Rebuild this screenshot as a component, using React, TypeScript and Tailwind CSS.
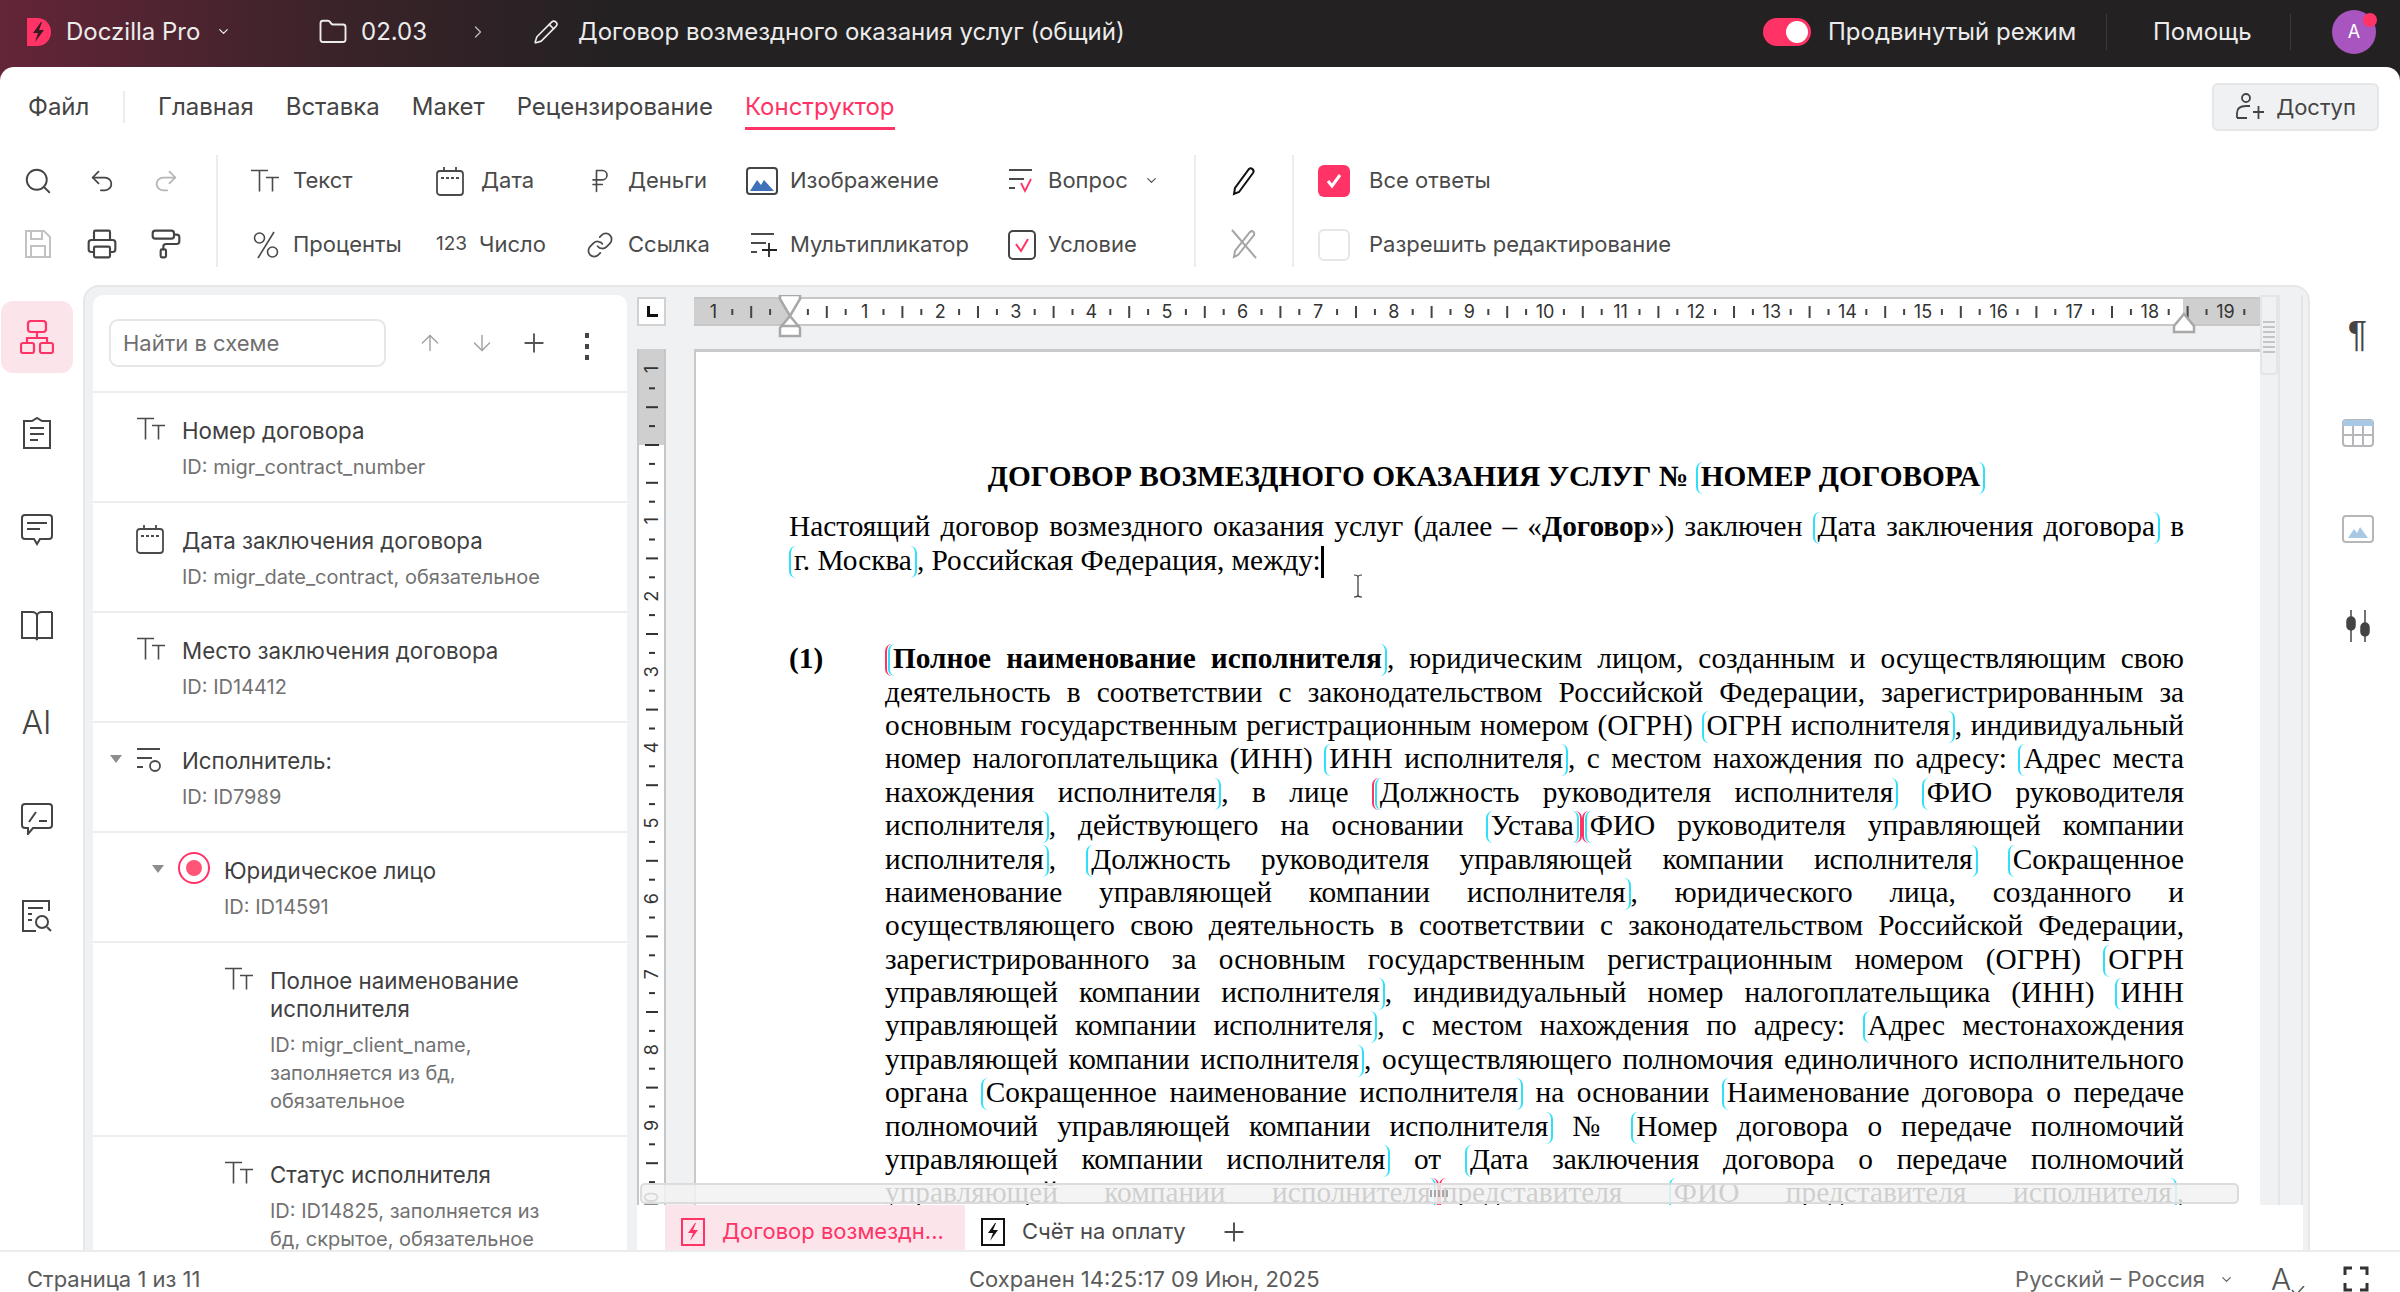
import React from "react";
import { ChevronDown, ChevronRight, Search, Undo2, Redo2, Printer, PaintRoller, Folder, Pencil, RussianRuble, Link, ArrowUp, ArrowDown, Plus } from "lucide-react";

const PINK = "#ff3366";

// {} cyan field, [] pink field, * bold
const parse = (s: string) => {
  const out: React.ReactNode[] = [];
  let bold = false;
  let buf = "";
  const flush = (k: number) => {
    if (buf) out.push(bold ? <b key={k}>{buf}</b> : <span key={k}>{buf}</span>);
    buf = "";
  };
  s.split("").forEach((c, i) => {
    if (c === "*") {
      flush(i);
      bold = !bold;
    } else if (c === "{") {
      flush(i);
      out.push(<i key={"m" + i} className="inline-block w-[7px] mr-[-2px] h-[32px] align-[-8px] border-l-2 border-[#30e0fa] rounded-l-[8px]" />);
    } else if (c === "}") {
      flush(i);
      out.push(<i key={"m" + i} className="inline-block w-[7px] ml-[-2px] h-[32px] align-[-8px] border-r-2 border-[#30e0fa] rounded-r-[8px]" />);
    } else if (c === "[") {
      flush(i);
      out.push(<i key={"m" + i} className="inline-block w-[7px] mr-[-4px] h-[32px] align-[-8px] border-l-2 border-[#ff3366] rounded-l-[8px]" />);
    } else if (c === "]") {
      flush(i);
      out.push(<i key={"m" + i} className="inline-block w-[7px] ml-[-4px] h-[32px] align-[-8px] border-r-2 border-[#ff3366] rounded-r-[8px]" />);
    } else buf += c;
  });
  flush(s.length);
  return out;
};

const lines = [
  "[{*Полное наименование исполнителя*}, юридическим лицом, созданным и осуществляющим свою",
  "деятельность в соответствии с законодательством Российской Федерации, зарегистрированным за",
  "основным государственным регистрационным номером (ОГРН) {ОГРН исполнителя}, индивидуальный",
  "номер налогоплательщика (ИНН) {ИНН исполнителя}, с местом нахождения по адресу: {Адрес места",
  "нахождения исполнителя}, в лице [{Должность руководителя исполнителя} {ФИО руководителя",
  "исполнителя}, действующего на основании {Устава}][{ФИО руководителя управляющей компании",
  "исполнителя}, {Должность руководителя управляющей компании исполнителя} {Сокращенное",
  "наименование управляющей компании исполнителя}, юридического лица, созданного и",
  "осуществляющего свою деятельность в соответствии с законодательством Российской Федерации,",
  "зарегистрированного за основным государственным регистрационным номером (ОГРН) {ОГРН",
  "управляющей компании исполнителя}, индивидуальный номер налогоплательщика (ИНН) {ИНН",
  "управляющей компании исполнителя}, с местом нахождения по адресу: {Адрес местонахождения",
  "управляющей компании исполнителя}, осуществляющего полномочия единоличного исполнительного",
  "органа {Сокращенное наименование исполнителя} на основании {Наименование договора о передаче",
  "полномочий управляющей компании исполнителя} № {Номер договора о передаче полномочий",
  "управляющей компании исполнителя} от {Дата заключения договора о передаче полномочий",
  "управляющей компании исполнителя}][представителя {ФИО представителя исполнителя},",
];

const TT = ({ className = "" }: { className?: string }) => (
  <svg width="30" height="24" viewBox="0 0 30 24" fill="none" stroke="#4a4a4a" strokeWidth="1.6" className={className}>
    <path d="M1 1.500h17M9.500 1.500v21M16 8.500h13M22.500 8.500v14" />
  </svg>
);

const Cal = () => (
  <svg width="28" height="30" viewBox="0 0 28 30" fill="none" stroke="#4a4a4a" strokeWidth="1.8">
    <rect x="1" y="5" width="26" height="24" rx="3" />
    <path d="M8 1v4M20 1v4" />
    <path d="M5 12h18" strokeDasharray="3 2" />
  </svg>
);

const Lines = ({ mark }: { mark: "check" | "plus" | "circle" }) => (
  <svg width="28" height="26" viewBox="0 0 28 26" fill="none" stroke="#4a4a4a" strokeWidth="1.8">
    <path d="M1 2h23M1 11h15M1 20h6" />
    {mark === "check" && <path d="M13 15l4 8 6-12" stroke={PINK} />}
    {mark === "plus" && <path d="M19 11v14M12 18h15" stroke="#222" />}
    {mark === "circle" && <circle cx="19" cy="19" r="5" />}
  </svg>
);

const Img = ({ light }: { light?: boolean }) => (
  <svg width="32" height="28" viewBox="0 0 32 28" fill="none">
    <rect x="1" y="1" width="30" height="26" rx="3" stroke={light ? "#b5b7ba" : "#444"} strokeWidth="2" />
    <path d={light ? "M6 23l6-9 3 4 3-6 8 11z" : "M4 24l7-11 4 5 3-5 10 11z"} fill={light ? "#a8c8e4" : "#3f72b8"} />
  </svg>
);

const Bolt = ({ color }: { color: string }) => (
  <svg width="24" height="28" viewBox="0 0 24 28" fill="none">
    <rect x="1" y="1" width="22" height="26" stroke={color} strokeWidth="2" />
    <path d="M14 5l-7 10h5l-3 8 8-11h-5l3-7z" fill={color} />
  </svg>
);

const Tool = ({ icon, label, chevron }: { icon: React.ReactNode; label: string; chevron?: boolean }) => (
  <div className="flex items-center text-[#4a4a4a]">
    {icon}
    <span className="whitespace-nowrap">{label}</span>
    {chevron && <ChevronDown size={15} className="ml-[16px] text-[#555]" />}
  </div>
);

const Row = ({ icon, title, sub, indent, caret }: { icon: React.ReactNode; title: React.ReactNode; sub: React.ReactNode; indent: number; caret?: boolean }) => (
  <div className="border-b-2 border-[#eceded]">
    <div className="flex pt-[24px] pb-[20px]" style={{ paddingLeft: indent }}>
      <div className="w-[46px] relative shrink-0">
        {caret && <div className="absolute left-[-26px] top-[8px] w-0 h-0 border-x-[6px] border-x-transparent border-t-[8px] border-t-[#8d8d8d]" />}
        {icon}
      </div>
      <div className="whitespace-nowrap">
        <div className="text-[22.3px] leading-[28px] text-[#3f3f3f]">{title}</div>
        <div className="mt-[8px] text-[20px] leading-[28px] text-[#727272]">{sub}</div>
      </div>
    </div>
  </div>
);

const HRuler = () => {
  const cm = 75.6;
  const x0 = 95;
  const ticks: React.ReactNode[] = [];
  for (let i = -5; i < 80; i++) {
    const x = x0 + (i * cm) / 4;
    if (x < 4 || x > 1560) continue;
    const m = ((i % 4) + 4) % 4;
    if (m === 0) {
      const n = Math.abs(i / 4);
      if (n !== 0)
        ticks.push(
          <text key={i} x={x} y={21} textAnchor="middle" fontSize="18" fontFamily="Inter, sans-serif" fill="#333">
            {n}
          </text>
        );
    } else {
      const h = m === 2 ? 12 : 6;
      ticks.push(<rect key={i} x={x - 1} y={15 - h / 2} width="2" height={h} fill="#444" />);
    }
  }
  return (
    <svg width="1566" height="29" className="block">
      <rect width="1566" height="29" fill="#cfcfcf" />
      <rect x="95" y="2" width="1394" height="25" fill="#fff" />
      <rect width="1566" height="2" y="0" fill="#c6c7c9" />
      <rect width="1566" height="2" y="27" fill="#c6c7c9" />
      {ticks}
    </svg>
  );
};

const VRuler = () => {
  const cm = 75.6;
  const y0 = 96;
  const ticks: React.ReactNode[] = [];
  for (let i = -4; i < 41; i++) {
    const y = y0 + (i * cm) / 4;
    if (y < 4) continue;
    const m = ((i % 4) + 4) % 4;
    if (m === 0 && i !== 0) {
      ticks.push(
        <text key={i} x={0} y={0} textAnchor="middle" fontSize="18" fontFamily="Inter, sans-serif" fill="#333" transform={`translate(21 ${y}) rotate(-90)`}>
          {Math.abs(i / 4)}
        </text>
      );
    } else {
      const w = i === 0 ? 14 : m === 2 ? 12 : 6;
      ticks.push(<rect key={i} x={15 - w / 2} y={y - 1} width={w} height="2" fill="#333" />);
    }
  }
  return (
    <svg width="29" height="856" className="block">
      <rect width="29" height="856" fill="#fff" />
      <rect width="29" height="96" fill="#cfcfcf" />
      <rect width="2" height="856" fill="#c6c7c9" />
      <rect x="27" width="2" height="856" fill="#c6c7c9" />
      {ticks}
    </svg>
  );
};

const Grip = () => <div className="w-[20px] h-[7px] bg-[repeating-linear-gradient(90deg,#a8a8a8_0_2px,transparent_2px_4px)]" />;

export default function App() {
  return (
    <div className="w-[2400px] h-[1292px] flex flex-col overflow-hidden bg-[linear-gradient(90deg,#642538_0%,#3a2329_14%,#232122_26%)] font-['Inter',sans-serif]">
      {/* top bar */}
      <div className="h-[67px] shrink-0 flex items-center pb-[4px] text-[24px] text-[#ececec]">
        <svg width="26" height="30" viewBox="0 0 26 30" className="ml-[26px]">
          <path d="M1 1h10c8 0 14 6 14 14s-6 14-14 14H1z" fill={PINK} />
          <path d="M15 5l-8 11h5l-3 9 9-12h-5l3-8z" fill="#3a1a22" />
        </svg>
        <span className="ml-[14px] w-[150px]">Doczilla Pro</span>
        <ChevronDown size={15} />
        <Folder size={30} strokeWidth={1.5} className="ml-[87px]" />
        <span className="ml-[13px] w-[107px]">02.03</span>
        <ChevronRight size={20} strokeWidth={1.5} className="text-[#bbb]" />
        <Pencil size={26} strokeWidth={1.5} className="ml-[45px]" />
        <span className="ml-[19px]">Договор возмездного оказания услуг (общий)</span>
        <div className="ml-auto flex items-center">
          <div className="w-[48px] h-[28px] rounded-full bg-[#ff3366] flex items-center justify-end pr-[3px]">
            <div className="w-[22px] h-[22px] rounded-full bg-white" />
          </div>
          <span className="ml-[17px] w-[279px] border-r border-[#3c3a3b]">Продвинутый режим</span>
          <span className="ml-[46px] w-[138px] border-r border-[#3c3a3b]">Помощь</span>
          <div className="relative ml-[41px] mr-[24px] w-[44px] h-[44px] rounded-full bg-[#a855c0] flex items-center justify-center text-[18px] text-white">
            A
            <div className="absolute right-[-1px] top-[3px] w-[14px] h-[14px] rounded-full bg-[#ff3366]" />
          </div>
        </div>
      </div>

      <div className="flex-1 min-h-0 flex flex-col bg-white rounded-t-[14px]">
        {/* tabs */}
        <div className="h-[77px] shrink-0 flex text-[24px] text-[#444]">
          <div className="ml-[28px] w-[97px] mt-[24px] h-[32px] border-r-2 border-[#eceded] leading-[32px]">Файл</div>
          <div className="ml-[33px] flex gap-[32px] leading-[32px] pt-[24px]">
            <span>Главная</span>
            <span>Вставка</span>
            <span>Макет</span>
            <span>Рецензирование</span>
            <span className="text-[#ff3366] h-[39px] border-b-[3px] border-[#ff3366]">Конструктор</span>
          </div>
          <div className="ml-auto mr-[21px] mt-[16px] w-[167px] h-[48px] rounded-[6px] bg-[#f0f1f3] border-2 border-[#e4e6e8] flex items-center justify-center gap-[11px] text-[22px]">
            <svg width="30" height="28" viewBox="0 0 30 28" fill="none" stroke="#444" strokeWidth="1.8">
              <circle cx="11" cy="5" r="4" />
              <path d="M2 25v-5c0-5 4-7 9-7h4M18 19h11M23.500 13v13M2 25h10" />
            </svg>
            Доступ
          </div>
        </div>

        {/* toolbar */}
        <div className="h-[141px] shrink-0 flex items-start pt-[5px] text-[22px]">
          <div className="ml-[6px] w-[192px] grid grid-cols-3 grid-rows-[63px_63px] place-items-center text-[#444]">
            <Search size={30} strokeWidth={1.5} />
            <Undo2 size={28} strokeWidth={1.5} />
            <Redo2 size={28} strokeWidth={1.5} className="text-[#b5b5b5]" />
            <svg width="26" height="28" viewBox="0 0 26 28" fill="none" stroke="#c2c2c2" strokeWidth="2">
              <path d="M1 1h18l6 6v20H1zM6 1v8h11V1M6 27V16h14v11" />
            </svg>
            <Printer size={32} strokeWidth={1.6} />
            <PaintRoller size={32} strokeWidth={1.6} />
          </div>
          <div className="ml-[18px] mt-[6px] h-[112px] w-[2px] bg-[#eceded]" />
          <div className="ml-[32px] grid grid-cols-[186px_150px_160px_262px_186px] grid-rows-[63px_65px] items-center">
            <Tool label="Текст" icon={<TT className="mr-[13px]" />} />
            <Tool label="Дата" icon={<span className="mr-[17px] flex"><Cal /></span>} />
            <Tool label="Деньги" icon={<RussianRuble size={28} strokeWidth={1.4} className="mr-[14px]" />} />
            <Tool label="Изображение" icon={<span className="mr-[12px] flex"><Img /></span>} />
            <Tool label="Вопрос" chevron icon={<span className="mr-[12px] flex"><Lines mark="check" /></span>} />
            <Tool
              label="Проценты"
              icon={
                <svg width="26" height="28" viewBox="0 0 26 28" fill="none" stroke="#4a4a4a" strokeWidth="1.6" className="ml-[3px] mr-[14px]">
                  <circle cx="6.500" cy="7" r="5" />
                  <circle cx="19.500" cy="21" r="5" />
                  <path d="M21 1L5 27" />
                </svg>
              }
            />
            <Tool label="Число" icon={<span className="mr-[12px] text-[19px]">123</span>} />
            <Tool label="Ссылка" icon={<Link size={28} strokeWidth={1.5} className="mr-[14px]" />} />
            <Tool label="Мультипликатор" icon={<span className="ml-[4px] mr-[12px] flex"><Lines mark="plus" /></span>} />
            <Tool
              label="Условие"
              icon={
                <svg width="28" height="30" viewBox="0 0 28 30" fill="none" className="mr-[12px]">
                  <rect x="1" y="1" width="26" height="28" rx="4" stroke="#444" strokeWidth="2" />
                  <path d="M8 14l5 7 7-12" stroke={PINK} strokeWidth="2" />
                </svg>
              }
            />
          </div>
          <div className="mt-[6px] h-[112px] w-[2px] bg-[#eceded]" />
          <div className="w-[96px] h-[126px] flex flex-col items-center justify-around text-[#111]">
            <svg width="26" height="30" viewBox="0 0 26 30" fill="none" stroke="#111" strokeWidth="2">
              <path d="M3 28l1-6L18 3c2-2 6 1 4 4L8 26z" />
            </svg>
            <svg width="28" height="30" viewBox="0 0 28 30" fill="none" stroke="#a5a5a5" strokeWidth="2">
              <path d="M2 1l24 28" />
              <path d="M4 28l1-6L20 3c2-2 5 0 4 3L8 26z" />
            </svg>
          </div>
          <div className="mt-[6px] h-[112px] w-[2px] bg-[#eceded]" />
          <div className="ml-[24px] grid grid-rows-[63px_65px] items-center text-[#4a4a4a]">
            <div className="flex items-center gap-[19px]">
              <div className="w-[32px] h-[32px] rounded-[6px] bg-[#ff3366] flex items-center justify-center">
                <svg width="20" height="20" viewBox="0 0 20 20" fill="none" stroke="#fff" strokeWidth="3">
                  <path d="M4 10l4 5 8-11" />
                </svg>
              </div>
              Все ответы
            </div>
            <div className="flex items-center gap-[19px]">
              <div className="w-[32px] h-[32px] rounded-[6px] border-2 border-[#e4e6e8]" />
              Разрешить редактирование
            </div>
          </div>
        </div>

        {/* main */}
        <div className="flex-1 min-h-0 flex">
          <div className="w-[83px] shrink-0 relative flex flex-col items-center text-[#444]">
            <div className="mt-[16px] ml-[-10px] w-[72px] h-[72px] rounded-[12px] bg-[#fbe4ea] flex items-center justify-center">
              <svg width="34" height="34" viewBox="0 0 34 34" fill="none" stroke={PINK} strokeWidth="2.2">
                <rect x="8" y="1" width="18" height="11" rx="3" />
                <rect x="1" y="23" width="13" height="10" rx="2" />
                <rect x="20" y="23" width="13" height="10" rx="2" />
                <path d="M17 12v6M7 23v-5h20v5" />
              </svg>
            </div>
            <div className="ml-[-10px] mt-[44px] flex flex-col items-center gap-[64.5px]">
              <svg width="28" height="32" viewBox="0 0 28 32" fill="none" stroke="#444" strokeWidth="2">
                <path d="M1 4h8l5-3 5 3h8v27H1zM7 11h14M7 17h14M7 23h8" />
              </svg>
              <svg width="32" height="32" viewBox="0 0 32 32" fill="none" stroke="#444" strokeWidth="2">
                <path d="M4 1h24a3 3 0 013 3v18a3 3 0 01-3 3H19l-3 5-3-5H4a3 3 0 01-3-3V4a3 3 0 013-3zM6 9h20M6 15h13" />
              </svg>
              <svg width="32" height="32" viewBox="0 0 32 32" fill="none" stroke="#444" strokeWidth="2">
                <path d="M1 2h10c3 0 5 2 5 4v24l-1-2H1zM31 2H21c-3 0-5 2-5 4M31 2v26H17" />
              </svg>
              <div className="h-[32px] text-[32px] leading-[32px] font-light">AI</div>
              <svg width="32" height="32" viewBox="0 0 32 32" fill="none" stroke="#444" strokeWidth="2">
                <path d="M4 1h24a3 3 0 013 3v18a3 3 0 01-3 3H12l-5 6v-6H4a3 3 0 01-3-3V4a3 3 0 013-3z" />
                <path d="M8 19l7-10M18 18h8" />
              </svg>
              <svg width="30" height="32" viewBox="0 0 30 32" fill="none" stroke="#444" strokeWidth="2">
                <path d="M14 31H1V1h26v10M6 8h15M6 14h4M6 20h4" />
                <circle cx="20" cy="22" r="6" />
                <path d="M25 27l4 4" />
              </svg>
            </div>
          </div>

          <div className="w-[2227px] shrink-0 flex border-x-2 border-t-2 border-[#e6e7e9] rounded-t-[16px] bg-[#f0f1f3] pl-[8px] pt-[8px] pr-[5px]">
            {/* schema panel */}
            <div className="w-[534px] shrink-0 bg-white rounded-t-[10px] overflow-hidden">
              <div className="h-[98px] border-b-2 border-[#eceded] flex items-start pt-[24px] pl-[16px] text-[#555]">
                <div className="w-[277px] h-[48px] rounded-[9px] border-2 border-[#e4e6e8] flex items-center pl-[12px] text-[22px] text-[#6f6f6f]">Найти в схеме</div>
                <ArrowUp size={26} strokeWidth={1.3} className="ml-[31px] mt-[11px] text-[#a0a0a0]" />
                <ArrowDown size={26} strokeWidth={1.3} className="ml-[26px] mt-[11px] text-[#a0a0a0]" />
                <Plus size={30} strokeWidth={1.5} className="ml-[24px] mt-[9px]" />
                <div className="ml-[36px] mt-[14px] flex flex-col gap-[6px]">
                  <div className="w-[4px] h-[5px] bg-[#444]" />
                  <div className="w-[4px] h-[5px] bg-[#444]" />
                  <div className="w-[4px] h-[5px] bg-[#444]" />
                </div>
              </div>
              <Row indent={43} icon={<TT />} title="Номер договора" sub="ID: migr_contract_number" />
              <Row indent={43} icon={<div className="-mt-[3px]"><Cal /></div>} title="Дата заключения договора" sub="ID: migr_date_contract, обязательное" />
              <Row indent={43} icon={<TT />} title="Место заключения договора" sub="ID: ID14412" />
              <Row indent={43} caret icon={<Lines mark="circle" />} title="Исполнитель:" sub="ID: ID7989" />
              <Row
                indent={85}
                caret
                icon={
                  <div className="-mt-[5px] w-[32px] h-[32px] rounded-full border-2 border-[#ff3366] flex items-center justify-center">
                    <div className="w-[16px] h-[16px] rounded-full bg-[#ff5577]" />
                  </div>
                }
                title="Юридическое лицо"
                sub="ID: ID14591"
              />
              <Row
                indent={131}
                icon={<TT />}
                title={<>Полное наименование<br />исполнителя</>}
                sub={<>ID: migr_client_name,<br />заполняется из бд,<br />обязательное</>}
              />
              <Row
                indent={131}
                icon={<TT />}
                title="Статус исполнителя"
                sub={<>ID: ID14825, заполняется из<br />бд, скрытое, обязательное</>}
              />
            </div>

            {/* editor */}
            <div className="ml-[10px] flex-1 min-w-0 flex flex-col">
              <div className="relative h-[910px] shrink-0 flex overflow-hidden">
                <div className="w-[29px] shrink-0 pt-[2px]">
                  <div className="h-[29px] border-2 border-[#d0d1d3] bg-white flex items-center justify-center">
                    <svg width="12" height="12" viewBox="0 0 12 12">
                      <path d="M1 0h3v8h8v3H1z" fill="#111" />
                    </svg>
                  </div>
                  <div className="mt-[23px]">
                    <VRuler />
                  </div>
                </div>
                <div className="ml-[28px] w-[1566px] shrink-0 pt-[2px]">
                  <HRuler />
                  <div className="mt-[23px] h-[860px] bg-white border-l-2 border-t-[3px] border-[#c8c9cb] pl-[93px] pt-[108px] relative font-['Liberation_Serif',serif] text-[29.33px] leading-[33.4px] text-black">
                    <div className="w-[1395px]">
                      <div className="h-[33.4px] text-center font-bold whitespace-nowrap">
                        ДОГОВОР ВОЗМЕЗДНОГО ОКАЗАНИЯ УСЛУГ № {parse("{НОМЕР ДОГОВОРА}")}
                      </div>
                      <div className="h-[33.4px] mt-[17px] text-justify [text-align-last:justify] whitespace-nowrap">
                        {parse("Настоящий договор возмездного оказания услуг (далее – «*Договор*») заключен {Дата заключения договора} в")}
                      </div>
                      <div className="h-[33.4px] whitespace-nowrap">
                        {parse("{г. Москва}, Российская Федерация, между:")}
                        <span className="inline-block w-[3px] h-[32px] bg-black align-[-8px]" />
                      </div>
                      <div className="mt-[65px] flex">
                        <div className="w-[96px] shrink-0 font-bold">(1)</div>
                        <div className="w-[1299px]">
                          {lines.map((l, i) => (
                            <div key={i} className="h-[33.4px] text-justify [text-align-last:justify] whitespace-nowrap">
                              {parse(l)}
                            </div>
                          ))}
                        </div>
                      </div>
                    </div>
                    <svg width="12" height="24" viewBox="0 0 12 24" fill="none" stroke="#333" strokeWidth="1.2" className="absolute left-[656px] top-[222px]">
                      <path d="M2 1c2 0 4 0 4 2v18c0 2-2 2-4 2M10 1C8 1 6 1 6 3v18c0 2 2 2 4 2" />
                    </svg>
                  </div>
                </div>
                <div className="w-[20px] shrink-0 bg-[#f0f1f3] border-r-2 border-[#e4e5e7] relative">
                  <div className="h-[80px] border-2 border-[#e4e5e7] rounded-b-[4px] flex flex-col items-center pt-[24px] gap-[3px]">
                    {[0, 1, 2, 3, 4, 5, 6].map((i) => (
                      <div key={i} className="w-[12px] h-[2px] bg-[#c4c4c4]" />
                    ))}
                  </div>
                </div>
                <div className="flex-1 border-r-2 border-[#e4e5e7]" />

                {/* margin markers */}
                <svg width="24" height="46" viewBox="0 0 24 46" fill="none" stroke="#a8a8a8" strokeWidth="2.5" className="absolute left-[141px] top-[-2px]">
                  <path fill="#fff" d="M2 2h20v4L12 23 2 6zM12 23l10 12v8H2v-8z" />
                  <path d="M2 33h20" />
                </svg>
                <svg width="24" height="22" viewBox="0 0 24 22" fill="none" stroke="#a8a8a8" strokeWidth="2.5" className="absolute left-[1535px] top-[17px]">
                  <path fill="#fff" d="M12 2l10 12v6H2v-6z" />
                </svg>

                {/* horizontal scrollbar */}
                <div className="absolute left-[3px] bottom-[1px] w-[1599px] h-[21px] rounded-[5px] border-2 border-[#dcdcdc] bg-[#f2f2f2]/85 flex items-center justify-center">
                  <Grip />
                </div>
              </div>

              {/* doc tabs */}
              <div className="flex-1 bg-white flex text-[22px] text-[#4a4a4a] pl-[28px]">
                <div className="h-full w-[300px] bg-[#fbe4ea] flex items-center pt-[8px] pl-[16px] gap-[17px] text-[#ff3366]">
                  <Bolt color={PINK} />
                  Договор возмездн...
                </div>
                <div className="pt-[8px] flex items-center">
                  <div className="ml-[16px] flex">
                    <Bolt color="#111" />
                  </div>
                  <span className="ml-[17px]">Счёт на оплату</span>
                  <Plus size={30} strokeWidth={1.5} className="ml-[33px]" />
                </div>
              </div>
            </div>
          </div>

          {/* right icons */}
          <div className="flex-1 flex flex-col items-center pl-[5px] pt-[34px] gap-[68px]">
            <div className="h-[32px] text-[36px] leading-[32px] font-['Liberation_Sans',sans-serif] text-[#444]">¶</div>
            <svg width="32" height="28" viewBox="0 0 32 28" fill="none" stroke="#b5b7ba" strokeWidth="2">
              <rect x="1" y="1" width="30" height="26" rx="3" />
              <rect x="1" y="1" width="30" height="6" fill="#a8c8e4" stroke="none" />
              <path d="M1 16h30M11 7v20M21 7v20" />
            </svg>
            <Img light />
            <svg width="30" height="34" viewBox="0 0 30 34" fill="#444" stroke="#444" strokeWidth="1.5" className="-mt-[2px]">
              <path d="M8 1v32M22 1v32" />
              <rect x="4" y="8" width="8" height="13" rx="4" />
              <rect x="18" y="14" width="8" height="13" rx="4" />
            </svg>
          </div>
        </div>

        {/* status bar */}
        <div className="h-[42px] shrink-0 border-t-2 border-[#ececec] pt-[14px] flex items-center text-[22px] text-[#5a5a5a]">
          <span className="ml-[27px] w-[942px]">Страница 1 из 11</span>
          <span>Сохранен 14:25:17 09 Июн, 2025</span>
          <div className="ml-auto flex items-center text-[#666]">
            Русский – Россия
            <ChevronDown size={15} className="ml-[14px]" />
            <div className="ml-[37px] relative w-[30px] h-[30px] text-[30px] leading-[30px] font-light text-[#555]">
              A
              <svg width="14" height="10" viewBox="0 0 14 10" fill="none" stroke="#555" strokeWidth="1.5" className="absolute right-[-4px] bottom-[-2px]">
                <path d="M1 4l4 5 8-9" />
              </svg>
            </div>
            <svg width="26" height="26" viewBox="0 0 26 26" fill="none" stroke="#333" strokeWidth="3" className="ml-[42px] mr-[31px]">
              <path d="M2 9V2h7M17 2h7v7M24 17v7h-7M9 24H2v-7" />
            </svg>
          </div>
        </div>
      </div>
    </div>
  );
}
